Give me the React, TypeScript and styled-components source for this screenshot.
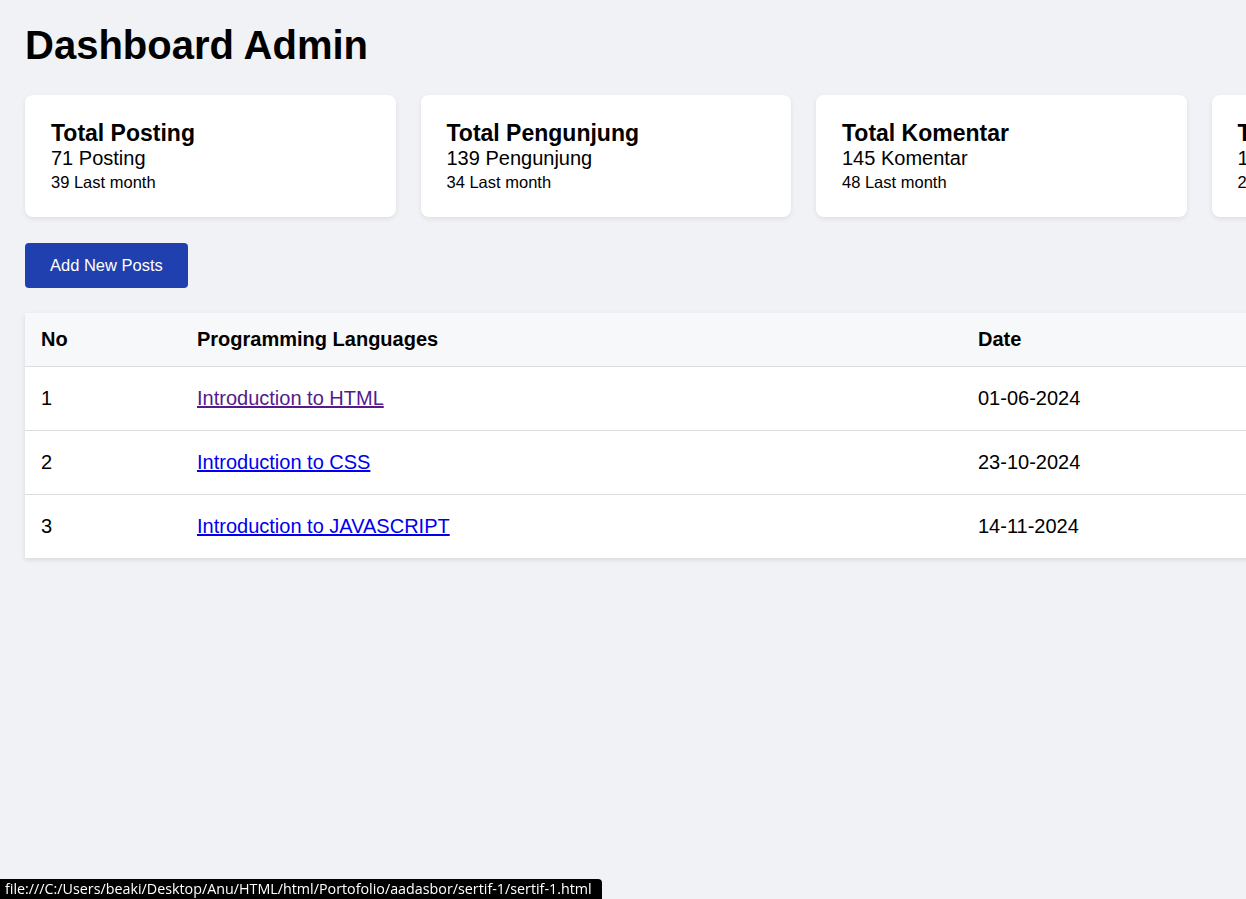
import styled, { createGlobalStyle } from 'styled-components';

const GlobalStyle = createGlobalStyle`
  html, body {
    margin: 0;
    padding: 0;
    overflow: hidden;
  }
  body {
    background: #f0f2f5;
    font-family: "Liberation Sans", Arial, sans-serif;
    color: #000;
  }
`;

const Page = styled.main`
  padding: 22px 25px;
  display: flex;
  flex-direction: column;
  align-items: flex-start;
`;

const Title = styled.h1`
  margin: 0 0 27px;
  font-size: 40px;
  line-height: 46px;
  font-weight: 700;
`;

const Stats = styled.section`
  display: flex;
  gap: 25px;
  margin-bottom: 26px;
`;

const Card = styled.div`
  flex: 0 0 370.5px;
  box-sizing: border-box;
  background: #fff;
  border-radius: 8px;
  padding: 25px 26px 23px;
  box-shadow: 0 2px 5px rgba(0, 0, 0, 0.08);
`;

const CardTitle = styled.h3`
  margin: 0;
  font-size: 23px;
  line-height: 26px;
  font-weight: 700;
`;

const CardValue = styled.p`
  margin: 0;
  font-size: 20px;
  line-height: 24px;
`;

const CardSub = styled.p`
  margin: 0;
  font-size: 16.5px;
  line-height: 24px;
`;

const AddButton = styled.button`
  height: 45px;
  padding: 0 25px;
  border: none;
  border-radius: 4px;
  background: #1f40ae;
  color: #fff;
  font-family: inherit;
  font-size: 16.5px;
  cursor: pointer;
  margin-bottom: 25px;
`;

const Table = styled.table`
  width: 1557px;
  border-collapse: collapse;
  background: #fff;
  box-shadow: 0 2px 5px rgba(0, 0, 0, 0.1);
  font-size: 20px;
  table-layout: fixed;
`;

const Th = styled.th<{ $w?: number }>`
  box-sizing: border-box;
  width: ${(p) => (p.$w ? `${p.$w}px` : 'auto')};
  text-align: left;
  background: #f7f8fa;
  padding: 15px 16px;
  line-height: 23px;
  font-weight: 700;
  border-bottom: 1px solid #ddd;
`;

const Td = styled.td`
  padding: 20px 16px;
  line-height: 23px;
  border-bottom: 1px solid #ddd;

  tr:last-child > & {
    border-bottom: none;
  }
`;

const Link = styled.a<{ $visited?: boolean }>`
  color: ${(p) => (p.$visited ? '#551a8b' : '#0000ee')};
  text-decoration: underline;
`;

const StatusBar = styled.div`
  position: fixed;
  left: 0;
  bottom: 0;
  background: #000;
  color: #fff;
  font-family: "Open Sans", "Liberation Sans", sans-serif;
  font-size: 14.3px;
  line-height: 20px;
  padding: 0 10px 0 5px;
  border-top-right-radius: 4px;
`;

const stats = [
  { title: 'Total Posting', value: '71 Posting', sub: '39 Last month' },
  { title: 'Total Pengunjung', value: '139 Pengunjung', sub: '34 Last month' },
  { title: 'Total Komentar', value: '145 Komentar', sub: '48 Last month' },
  { title: 'Total Kategori', value: '12 Kategori', sub: '2 Last month' },
];

const posts = [
  { no: 1, title: 'Introduction to HTML', date: '01-06-2024', visited: true },
  { no: 2, title: 'Introduction to CSS', date: '23-10-2024', visited: false },
  { no: 3, title: 'Introduction to JAVASCRIPT', date: '14-11-2024', visited: false },
];

export default function App() {
  return (
    <>
      <GlobalStyle />
      <Page>
        <Title>Dashboard Admin</Title>
        <Stats>
          {stats.map((s) => (
            <Card key={s.title}>
              <CardTitle>{s.title}</CardTitle>
              <CardValue>{s.value}</CardValue>
              <CardSub>{s.sub}</CardSub>
            </Card>
          ))}
        </Stats>
        <AddButton>Add New Posts</AddButton>
        <Table>
          <thead>
            <tr>
              <Th $w={156}>No</Th>
              <Th $w={781}>Programming Languages</Th>
              <Th>Date</Th>
            </tr>
          </thead>
          <tbody>
            {posts.map((p) => (
              <tr key={p.no}>
                <Td>{p.no}</Td>
                <Td>
                  <Link href="#" $visited={p.visited}>
                    {p.title}
                  </Link>
                </Td>
                <Td>{p.date}</Td>
              </tr>
            ))}
          </tbody>
        </Table>
      </Page>
      <StatusBar>file:///C:/Users/beaki/Desktop/Anu/HTML/html/Portofolio/aadasbor/sertif-1/sertif-1.html</StatusBar>
    </>
  );
}
